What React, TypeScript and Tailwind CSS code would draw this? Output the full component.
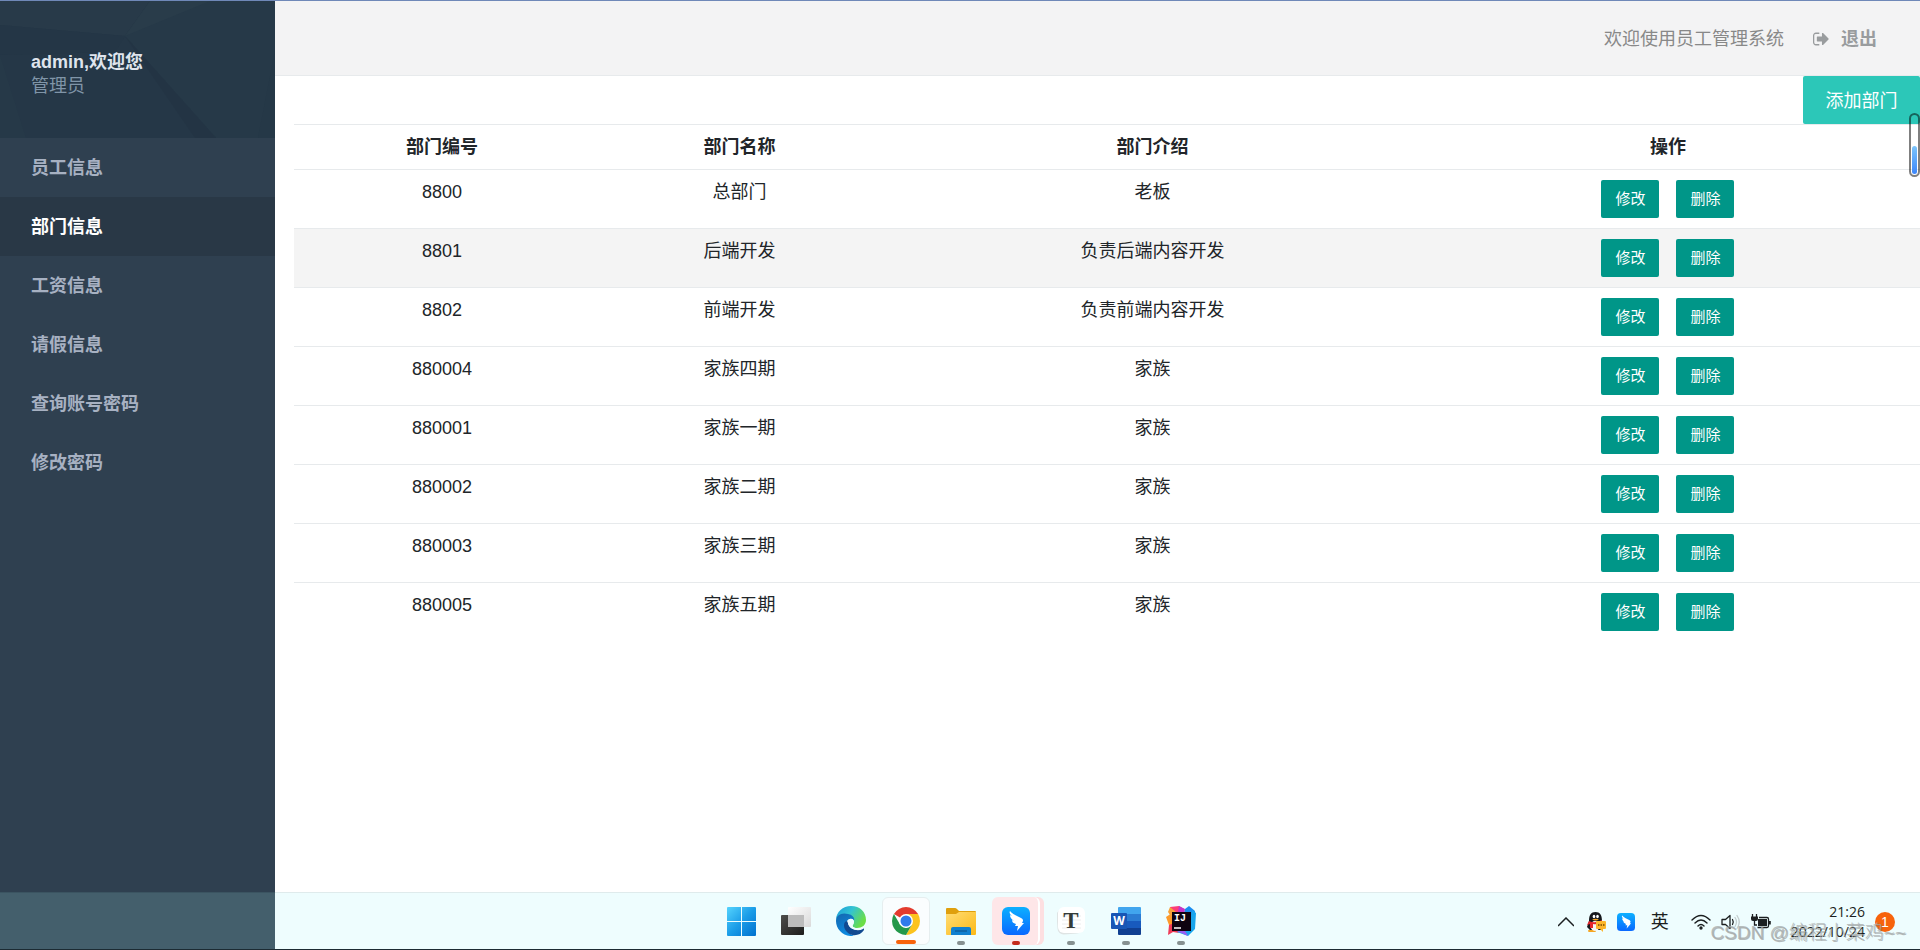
import type { ReactNode } from "react";
import clsx from "clsx";

const menu = ["员工信息", "部门信息", "工资信息", "请假信息", "查询账号密码", "修改密码"];

const departments = [
    { id: "8800", name: "总部门", intro: "老板" },
    { id: "8801", name: "后端开发", intro: "负责后端内容开发" },
    { id: "8802", name: "前端开发", intro: "负责前端内容开发" },
    { id: "880004", name: "家族四期", intro: "家族" },
    { id: "880001", name: "家族一期", intro: "家族" },
    { id: "880002", name: "家族二期", intro: "家族" },
    { id: "880003", name: "家族三期", intro: "家族" },
    { id: "880005", name: "家族五期", intro: "家族" },
];

function SignOutIcon() {
    return (
        <svg viewBox="0 128 1600 1536" className="w-4 h-4" fill="currentColor" aria-hidden="true">
            <path d="M640 1440q0 4 1 20t.5 26.5-3 23.5-10 19.5-20.5 6.5h-320q-119 0-203.5-84.5t-84.5-203.5v-704q0-119 84.5-203.5t203.5-84.5h320q13 0 22.5 9.5t9.5 22.5q0 4 1 20t.5 26.5-3 23.5-10 19.5-20.5 6.5h-320q-66 0-113 47t-47 113v704q0 66 47 113t113 47h312l11.5 1 11.5 3 8 5.5 7 9 2 13.5zm928-544q0 26-19 45l-544 544q-19 19-45 19t-45-19-19-45v-288h-448q-26 0-45-19t-19-45v-384q0-26 19-45t45-19h448v-288q0-26 19-45t45-19 45 19l544 544q19 19 19 45z" />
        </svg>
    );
}

function WindowsIcon() {
    return (
        <svg viewBox="0 0 29 29" className="w-[29px] h-[29px]">
            <defs>
                <linearGradient id="win" x1="0" y1="0" x2="29" y2="29" gradientUnits="userSpaceOnUse">
                    <stop offset="0" stopColor="#55d3fd" />
                    <stop offset="0.5" stopColor="#1b9de8" />
                    <stop offset="1" stopColor="#0070ce" />
                </linearGradient>
            </defs>
            <g fill="url(#win)">
                <path d="M1 0H14V14H0V1Q0 0 1 0Z" />
                <path d="M15 0H28Q29 0 29 1V14H15Z" />
                <path d="M0 15H14V29H1Q0 29 0 28Z" />
                <path d="M15 15H29V28Q29 29 28 29H15Z" />
            </g>
        </svg>
    );
}

function TaskViewIcon() {
    return (
        <svg viewBox="0 0 30 28" className="w-[30px] h-7">
            <defs>
                <linearGradient id="tv1" x1="0" y1="0" x2="1" y2="1">
                    <stop offset="0" stopColor="#4d4d4b" />
                    <stop offset="1" stopColor="#1d1d1c" />
                </linearGradient>
                <linearGradient id="tv2" x1="0" y1="0" x2="1" y2="1">
                    <stop offset="0" stopColor="#ffffff" />
                    <stop offset="1" stopColor="#d9d9d9" />
                </linearGradient>
            </defs>
            <rect y="8" width="23" height="20" rx="1" fill="url(#tv1)" />
            <rect x="7" width="23" height="20" rx="1" fill="url(#tv2)" />
            <rect x="7" y="8" width="16" height="12" fill="#bcbcbc" />
        </svg>
    );
}

function EdgeIcon() {
    return (
        <svg viewBox="0 0 30 30" className="w-[30px] h-[30px]">
            <defs>
                <linearGradient id="edgeTop" x1="0" y1="0" x2="1" y2="0.5">
                    <stop offset="0" stopColor="#1b9bdc" />
                    <stop offset="0.5" stopColor="#33c3d2" />
                    <stop offset="1" stopColor="#6ade47" />
                </linearGradient>
                <linearGradient id="edgeLeft" x1="0" y1="0" x2="0.4" y2="1">
                    <stop offset="0" stopColor="#1466ae" />
                    <stop offset="1" stopColor="#0d8ae0" />
                </linearGradient>
            </defs>
            <path d="M0 14C0 6 7 0 15 0C24 0 30 6 30 14C30 19 26 22 21 22C18 22 16 21 17 19C19 17 18 11 12 10C6 9 1 11 0 14Z" fill="url(#edgeTop)" />
            <path d="M0 15C0 9 6 6 12 8C17 9 19 12 18 15C17 12 13 12 11 15C8 20 11 27 18 30C8 31 0 24 0 15Z" fill="url(#edgeLeft)" />
            <path d="M11 15C7 16 7 22 11 26C16 31 24 30 28 24C28 23 28 22 27 23C21 26 13 23 12 17Z" fill="#114a91" />
            <path d="M18 15C17 12 13 12 12 15C11 20 16 24 22 24C25 24 27 22 28 21C25 23 18 23 16 20C16 19 18 18 18 15Z" fill="#f1fcfe" />
        </svg>
    );
}

function ChromeIcon() {
    return (
        <svg viewBox="0 0 28 28" className="w-7 h-7">
            <path d="M14 14L1.9 7A14 14 0 0 1 26.1 7Z" fill="#e33b2e" />
            <path d="M14 7H26.1A14 14 0 0 1 14 28L20 17.5Z" fill="#fcc31e" />
            <path d="M1.9 7L8 17.5L14 21L20 17.5L14 28A14 14 0 0 1 1.9 7Z" fill="#24984a" />
            <circle cx="14" cy="14" r="7" fill="#fff" />
            <circle cx="14" cy="14" r="5.5" fill="#2f7aeb" />
        </svg>
    );
}

function FolderIcon() {
    return (
        <svg viewBox="0 0 30 27" className="w-[30px] h-[27px]">
            <defs>
                <linearGradient id="folder" x1="0" y1="0" x2="1" y2="1">
                    <stop offset="0" stopColor="#ffdd75" />
                    <stop offset="1" stopColor="#fcb916" />
                </linearGradient>
            </defs>
            <path d="M0 1Q0 0 1 0H9Q10 0 11 1L13 3H29Q30 3 30 4V12H0Z" fill="#dfa00d" />
            <path d="M0 6H10L13 4H30V26Q30 27 29 27H1Q0 27 0 26Z" fill="url(#folder)" />
            <path d="M5 27V21Q5 19 7 19H23Q25 19 25 21V27Z" fill="#1080cf" />
            <path d="M9 23H21" stroke="#0b4f86" />
        </svg>
    );
}

function DingTalkIcon({ className }: { className: string }) {
    return (
        <svg viewBox="0 0 28 28" className={className}>
            <defs>
                <linearGradient id="ding" x1="0" y1="0" x2="0" y2="1">
                    <stop offset="0" stopColor="#0cb0ff" />
                    <stop offset="1" stopColor="#0a68ff" />
                </linearGradient>
            </defs>
            <rect width="28" height="28" rx="6" fill="url(#ding)" />
            <path d="M8 4C10 7 15 9 19 11C21 12 21 13 21 14L20 16H22L15 24L16 19H13L14 17C11 16 10 15 10 13L12 14C9 12 8 10 8 8L10 9C8 7 7 6 8 4Z" fill="#fff" />
        </svg>
    );
}

function TyporaIcon() {
    return (
        <svg viewBox="0 0 28 28" className="w-7 h-7">
            <rect x="0" y="2" width="25" height="25" rx="6" fill="#dfe4e4" transform="rotate(-4 13 14)" />
            <rect x="1" y="0" width="27" height="26" rx="6" fill="#fff" />
            <path d="M5 9H24M5 13H24M5 17H24M5 21H24" stroke="#ececec" />
            <text x="14" y="21" textAnchor="middle" fontSize="23" fontWeight="700" fontFamily="Liberation Serif, serif" fill="#343b38">T</text>
        </svg>
    );
}

function WordIcon() {
    return (
        <svg viewBox="0 0 30 28" className="w-[30px] h-7">
            <path d="M7 1Q7 0 8 0H29Q30 0 30 1V7H7Z" fill="#41a5ee" />
            <path d="M7 7H30V14H7Z" fill="#2b7cd3" />
            <path d="M7 14H30V21H7Z" fill="#185abd" />
            <path d="M7 21H30V27Q30 28 29 28H8Q7 28 7 27Z" fill="#103f91" />
            <rect y="6" width="16" height="16" rx="1" fill="#1856b5" />
            <text x="8" y="18" textAnchor="middle" fontSize="12" fontWeight="700" fontFamily="Open Sans, sans-serif" fill="#fff">W</text>
        </svg>
    );
}

function IdeaIcon() {
    return (
        <svg viewBox="0 0 30 30" className="w-[30px] h-[30px]">
            <path d="M4 1L13 0L18 3L16 15L5 12Z" fill="#fc3e78" />
            <path d="M0 11L6 7L10 15L6 24L3 19Z" fill="#fd9a2b" />
            <path d="M4 1L2 6L6 12L10 6Z" fill="#f7a13a" />
            <path d="M3 19L8 17L13 27L7 26L2 29Z" fill="#ef3b58" />
            <path d="M19 3L23 0L29 5L27 18L17 10Z" fill="#198cf0" />
            <path d="M26 4L30 7L29 23L22 30L11 26L24 18Z" fill="#18a5ec" />
            <path d="M11 25L18 23L22 30Z" fill="#9a5cf2" />
            <path d="M13 0L19 3L18 8L12 6Z" fill="#c135c8" />
            <rect x="6" y="6" width="19" height="19" fill="#0d0310" />
            <text x="8" y="15" fontSize="10" fontWeight="700" fontFamily="Liberation Mono, monospace" fill="#fff">IJ</text>
            <path d="M8 22H15" stroke="#fff" strokeWidth="1.5" />
        </svg>
    );
}

function QQIcon() {
    return (
        <svg viewBox="0 0 20 20" className="w-5 h-5">
            <ellipse cx="6" cy="19" rx="4" ry="1.4" fill="#f5a623" />
            <path d="M3 9C3 3 5 0 9.5 0S16 3 16 9L18 13L15 18H4L1 15Z" fill="#15181c" />
            <ellipse cx="9" cy="14" rx="4.5" ry="5" fill="#f5f5f5" />
            <path d="M3 9Q9 12 16 8V11Q10 13 7 12V16H4V12L1 13Z" fill="#e4252b" />
            <ellipse cx="8" cy="4.5" rx="1.3" ry="1.8" fill="#fff" />
            <ellipse cx="11.5" cy="4.5" rx="1.3" ry="1.8" fill="#fff" />
            <path d="M6 7.5Q9.5 6 13 7.5Q9.5 9.5 6 7.5Z" fill="#f9a825" />
            <path d="M11 9H19Q20 9 20 10V16Q20 17 19 17H17V20L14 17H11Q10 17 10 16V10Q10 9 11 9Z" fill="#fdb62b" />
            <path d="M12 13H13.5M14.5 13H16M17 13H18.5" stroke="#7a4a00" strokeWidth="1.3" />
        </svg>
    );
}

function WifiIcon() {
    return (
        <svg viewBox="0 0 20 16" className="w-5 h-4" fill="none" stroke="#1b1f20" strokeWidth="1.4" strokeLinecap="round">
            <path d="M1 6Q10 -3 19 6M4 9Q10 3 16 9M7 12Q10 9 13 12" />
            <circle cx="10" cy="14" r="1" fill="#1b1f20" />
        </svg>
    );
}

function VolumeIcon() {
    return (
        <svg viewBox="0 0 20 16" className="w-5 h-4" fill="none" stroke="#1b1f20" strokeWidth="1.3" strokeLinejoin="round" strokeLinecap="round">
            <path d="M1 5.5H4.5L9 1.5V14.5L4.5 10.5H1Z" />
            <path d="M11.5 5.5Q13 8 11.5 10.5" />
            <path d="M14 3.5Q17 8 14 12.5M16 1.5Q20.5 8 16 14.5" stroke="#c3cdce" />
        </svg>
    );
}

function BatteryIcon() {
    return (
        <svg viewBox="0 0 20 16" className="w-5 h-4" fill="none" stroke="#1b1f20" strokeWidth="1.3">
            <path d="M1.5 0V3M5.5 0V3M3.5 6V11H6" />
            <path d="M0 2.5H7V5Q7 7 5 7H2Q0 7 0 5Z" fill="#1b1f20" stroke="none" />
            <path d="M8 3.5H16Q17.5 3.5 17.5 5V12Q17.5 13.5 16 13.5H6.5" />
            <rect x="7" y="5" width="9" height="7" fill="#1b1f20" stroke="none" />
            <path d="M18.8 7V10.5" strokeWidth="2" />
        </svg>
    );
}

/* One app on the task bar, with its running mark below */
function TaskApp({ label, icon, mark, tile }: { label: string; icon: ReactNode; mark?: string; tile?: string }) {
    return (
        <button aria-label={label} className="w-[55px] h-full flex items-center justify-center">
            <span className={clsx("relative w-12 h-12 rounded-md flex items-center justify-center", tile)}>
                {icon}
                {mark && <span className={clsx("absolute bottom-0 left-1/2 -translate-x-1/2 h-1 rounded-full", mark)} />}
            </span>
        </button>
    );
}

function Sidebar() {
    return (
        <aside className="w-[275px] shrink-0 bg-[#2f4050]">
            <div className="relative h-[137px] overflow-hidden bg-[#253747]">
                <svg viewBox="0 1 275 137" preserveAspectRatio="none" className="absolute inset-0 w-full h-full" aria-hidden="true">
                    <path d="M0 1H150L125 36L0 25Z" fill="#283a49" />
                    <path d="M150 1H275V138H216L125 36Z" fill="#263948" />
                    <path d="M150 1H210L125 36Z" fill="#293c4a" />
                    <path d="M125 36L216 138H195Z" fill="#233444" />
                    <path d="M0 25L125 36L115 52L0 55Z" fill="#243646" />
                    <path d="M275 50L258 138H275Z" fill="#253847" />
                    <path d="M0 55L26 138H0Z" fill="#263948" />
                </svg>
                <div className="relative pt-[49px] px-[31px] leading-6">
                    <p className="font-bold text-[#dfe4ed]">admin,欢迎您</p>
                    <p className="text-[#8095a8]">管理员</p>
                </div>
            </div>
            <nav>
                {menu.map((item) => (
                    <a
                        key={item}
                        href="#"
                        className={clsx(
                            "flex items-center h-[59px] pt-0.5 px-[31px] font-bold",
                            item === "部门信息" ? "bg-[#293846] text-white" : "text-[#a7b1c2]"
                        )}
                    >
                        {item}
                    </a>
                ))}
            </nav>
        </aside>
    );
}

function DepartmentTable() {
    return (
        <table className="w-full table-fixed text-center leading-6 text-[#212529]">
            <thead>
                <tr className="border-t border-[#e7eaec]">
                    <th className="w-[18.2%] py-2.5">部门编号</th>
                    <th className="w-[18.4%] py-2.5">部门名称</th>
                    <th className="w-[32.4%] py-2.5">部门介绍</th>
                    <th className="w-[31%] py-2.5">操作</th>
                </tr>
            </thead>
            <tbody>
                {departments.map((dept) => (
                    <tr
                        key={dept.id}
                        className={clsx("border-t border-[#e7eaec] align-top", dept.id === "8801" && "bg-[#f4f4f4]")}
                    >
                        <td className="py-2.5">{dept.id}</td>
                        <td className="py-2.5">{dept.name}</td>
                        <td className="py-2.5">{dept.intro}</td>
                        <td className="py-2.5">
                            <div className="flex justify-center gap-[17px]">
                                <button className="w-[58px] h-[38px] rounded-xs bg-[#009688] text-white text-[15px]">修改</button>
                                <button className="w-[58px] h-[38px] rounded-xs bg-[#009688] text-white text-[15px]">删除</button>
                            </div>
                        </td>
                    </tr>
                ))}
            </tbody>
        </table>
    );
}

function Taskbar() {
    return (
        <footer className="relative h-[58px] shrink-0 grid grid-cols-[1fr_auto_1fr] bg-[#eefdfe] border-b border-[#1c2b33]">
            <div className="flex border-t border-[#dfebec]">
                <div className="w-[275px] -mt-px bg-[#445f6c] border-t border-[#3b5461]" />
            </div>

            {/* Apps */}
            <div className="flex items-center pl-0.5 border-t border-[#dfebec]">
                <TaskApp label="开始" icon={<WindowsIcon />} />
                <TaskApp label="任务视图" icon={<TaskViewIcon />} />
                <TaskApp label="Edge" icon={<EdgeIcon />} />
                <TaskApp label="Chrome" icon={<ChromeIcon />} tile="bg-[#fafdfe] border border-[#e6eeef]" mark="w-5 bg-[#f7630c]" />
                <TaskApp label="文件" icon={<FolderIcon />} mark="w-2 bg-[#869191]" />
                <TaskApp
                    label="钉钉"
                    icon={<DingTalkIcon className="w-7 h-7" />}
                    tile="bg-[#fee6e8] border-x-2 border-l-[#fee6e8] border-r-white shadow-[4px_0_0_#fddfe1]"
                    mark="w-2 bg-[#c42b1c]"
                />
                <TaskApp label="Typora" icon={<TyporaIcon />} mark="w-2 bg-[#869191]" />
                <TaskApp label="Word" icon={<WordIcon />} mark="w-2 bg-[#869191]" />
                <TaskApp label="IDEA" icon={<IdeaIcon />} mark="w-2 bg-[#869191]" />
            </div>

            {/* Tray */}
            <div className="flex items-center justify-end pt-0.5 pr-[25px] border-t border-[#dfebec] text-[#1b1f20]">
                <svg viewBox="0 0 16 10" className="w-4 h-2.5 mr-3" fill="none" stroke="currentColor" strokeWidth="1.5">
                    <path d="M0 9L8 1L16 9" />
                </svg>
                <QQIcon />
                <DingTalkIcon className="w-[18px] h-[18px] ml-[11px] mr-4" />
                <span className="text-[18px] mr-[22px]">英</span>
                <WifiIcon />
                <span className="ml-2.5 mr-2.5">
                    <VolumeIcon />
                </span>
                <BatteryIcon />
                <div className="ml-5 text-right text-[14px] leading-5 font-[Open_Sans,sans-serif]">
                    <p>21:26</p>
                    <p>2022/10/24</p>
                </div>
                <span className="ml-2.5 w-5 h-5 rounded-full bg-[#f7630c] text-white text-[14px] leading-5 text-center">1</span>
            </div>

            <p className="absolute right-3.5 bottom-1 text-[19px] leading-6 font-light text-[#a8adad]/80 [text-shadow:1px_1px_0_#77777780]">
                CSDN @编程小菜鸡~~
            </p>
        </footer>
    );
}

export default function App() {
    return (
        <div className="min-h-screen flex flex-col border-t border-[#6f88b8] bg-white text-[18px] font-[Liberation_Sans,Noto_Sans_CJK_SC,sans-serif]">
            <div className="flex flex-1">
                <Sidebar />
                <main className="relative flex-1">
                    <header className="h-[75px] flex items-center justify-end pt-0.5 pr-[43px] bg-[#f3f3f4] border-b border-[#e7eaec]">
                        <span className="text-[#888888]">欢迎使用员工管理系统</span>
                        <a href="#" className="ml-[29px] flex items-center gap-3 font-bold text-[#999c9e]">
                            <SignOutIcon />
                            退出
                        </a>
                    </header>
                    <div className="flex justify-end">
                        <button className="w-[117px] h-12 pt-0.5 rounded-xs bg-[#2cc7b8] text-white">添加部门</button>
                    </div>
                    <div className="pl-[19px]">
                        <DepartmentTable />
                    </div>

                    {/* Floating scroll handle */}
                    <div className="absolute right-0 top-28 w-[11px] h-16 p-px flex items-end rounded-full border-2 border-black/50">
                        <div className="w-full h-7 rounded-full bg-linear-to-b from-[#7cc4fa] to-[#3d86fb]" />
                    </div>
                </main>
            </div>
            <Taskbar />
        </div>
    );
}
